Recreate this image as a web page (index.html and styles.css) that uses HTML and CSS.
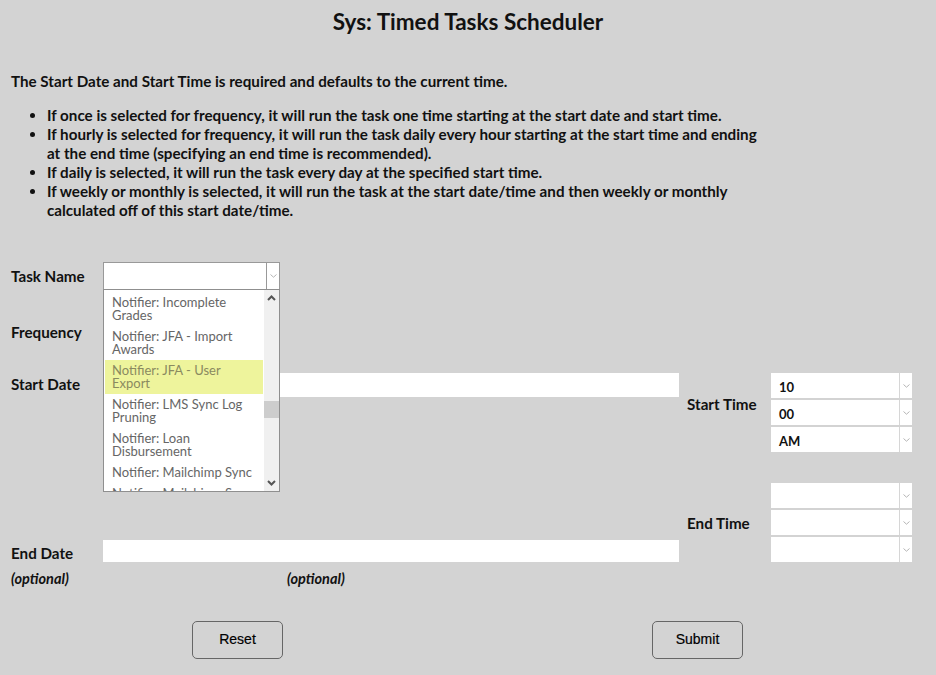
FILE: index.html
```html
<!DOCTYPE html>
<html>
<head>
<meta charset="utf-8">
<link rel="stylesheet" href="styles.css">
</head>
<body>
<h1 class="title">Sys: Timed Tasks Scheduler</h1>
<p class="intro">The Start Date and Start Time is required and defaults to the current time.</p>
<ul class="rules">
  <li>If once is selected for frequency, it will run the task one time starting at the start date and start time.</li>
  <li>If hourly is selected for frequency, it will run the task daily every hour starting at the start time and ending at the end time (specifying an end time is recommended).</li>
  <li>If daily is selected, it will run the task every day at the specified start time.</li>
  <li>If weekly or monthly is selected, it will run the task at the start date/time and then weekly or monthly calculated off of this start date/time.</li>
</ul>

<div class="form">
  <div class="left">
    <div class="row row-task">
      <label class="lbl">Task Name</label>
      <div class="task-wrap">
        <div class="select task-select">
          <span class="val"></span>
          <span class="arrow"><svg width="7" height="4" viewBox="0 0 7 4"><polyline points="0.5,0.5 3.5,3.2 6.5,0.5" fill="none" stroke="#b5b5b5" stroke-width="1"/></svg></span>
        </div>
        <div class="dropdown">
          <div class="items">
            <div class="item">Notifier: Incomplete Grades</div>
            <div class="item">Notifier: JFA - Import Awards</div>
            <div class="item hl">Notifier: JFA - User Export</div>
            <div class="item">Notifier: LMS Sync Log Pruning</div>
            <div class="item">Notifier: Loan Disbursement</div>
            <div class="item">Notifier: Mailchimp Sync</div>
            <div class="item">Notifier: Mailchimp Sync</div>
          </div>
          <div class="scrollbar">
            <svg class="sb-up" width="9" height="6" viewBox="0 0 9 6"><polyline points="1,5 4.5,1.5 8,5" fill="none" stroke="#555" stroke-width="2"/></svg>
            <div class="thumb"></div>
            <svg class="sb-down" width="9" height="6" viewBox="0 0 9 6"><polyline points="1,1 4.5,4.5 8,1" fill="none" stroke="#555" stroke-width="2"/></svg>
          </div>
        </div>
      </div>
    </div>
    <div class="row row-freq">
      <label class="lbl">Frequency</label>
      <div class="select freq-select"><span class="val"></span></div>
    </div>
    <div class="row row-start">
      <label class="lbl">Start Date</label>
      <div class="input date-input"></div>
    </div>
    <div class="row row-end">
      <label class="lbl">End Date</label>
      <div class="input date-input end-input"></div>
    </div>
    <div class="row row-opt">
      <span class="opt">(optional)</span>
      <span class="opt opt2">(optional)</span>
    </div>
  </div>
  <div class="right">
    <div class="tgroup tstart">
      <label class="lbl tlbl">Start Time</label>
      <div class="tsel">
        <div class="select small"><span class="val">10</span><span class="arrow"><svg width="7" height="4" viewBox="0 0 7 4"><polyline points="0.5,0.5 3.5,3.2 6.5,0.5" fill="none" stroke="#b5b5b5" stroke-width="1"/></svg></span></div>
        <div class="select small"><span class="val">00</span><span class="arrow"><svg width="7" height="4" viewBox="0 0 7 4"><polyline points="0.5,0.5 3.5,3.2 6.5,0.5" fill="none" stroke="#b5b5b5" stroke-width="1"/></svg></span></div>
        <div class="select small"><span class="val">AM</span><span class="arrow"><svg width="7" height="4" viewBox="0 0 7 4"><polyline points="0.5,0.5 3.5,3.2 6.5,0.5" fill="none" stroke="#b5b5b5" stroke-width="1"/></svg></span></div>
      </div>
    </div>
    <div class="tgroup tend">
      <label class="lbl tlbl">End Time</label>
      <div class="tsel">
        <div class="select small"><span class="val"></span><span class="arrow"><svg width="7" height="4" viewBox="0 0 7 4"><polyline points="0.5,0.5 3.5,3.2 6.5,0.5" fill="none" stroke="#b5b5b5" stroke-width="1"/></svg></span></div>
        <div class="select small"><span class="val"></span><span class="arrow"><svg width="7" height="4" viewBox="0 0 7 4"><polyline points="0.5,0.5 3.5,3.2 6.5,0.5" fill="none" stroke="#b5b5b5" stroke-width="1"/></svg></span></div>
        <div class="select small"><span class="val"></span><span class="arrow"><svg width="7" height="4" viewBox="0 0 7 4"><polyline points="0.5,0.5 3.5,3.2 6.5,0.5" fill="none" stroke="#b5b5b5" stroke-width="1"/></svg></span></div>
      </div>
    </div>
  </div>
</div>

<div class="buttons">
  <button class="btn reset">Reset</button>
  <button class="btn submit">Submit</button>
</div>
</body>
</html>
```

FILE: styles.css
```css
html, body {
  margin: 0;
  padding: 0;
  background: #d3d3d3;
}
body {
  font-family: Lato, "Liberation Sans", sans-serif;
  color: #111;
  width: 936px;
  height: 675px;
  overflow: hidden;
}
.title {
  margin: 0;
  padding-top: 9px;
  height: 28px;
  line-height: 26px;
  font-size: 22.5px;
  font-weight: 700;
  text-align: center;
}
.intro {
  margin: 35px 0 0 11px;
  font-size: 15.2px;
  font-weight: 700;
  line-height: 19px;
}
.rules {
  margin: 15px 0 0 0;
  padding: 0 0 0 47px;
  width: 725px;
  font-size: 15.2px;
  font-weight: 700;
  line-height: 19px;
}
.rules li {
  padding: 0;
}
.form {
  display: flex;
  margin-top: 42px;
}
.left {
  width: 679px;
  display: flex;
  flex-direction: column;
}
.row {
  display: flex;
  align-items: center;
}
.lbl {
  width: 103px;
  padding-left: 11px;
  box-sizing: border-box;
  font-size: 15.2px;
  font-weight: 700;
  flex: none;
}
.select {
  display: flex;
  background: #fff;
  box-sizing: border-box;
}
.select .val {
  flex: 1;
  font-size: 13px;
  font-weight: 700;
  padding-left: 8px;
}
.select .arrow {
  width: 12px;
  border-left: 1px solid #d6d6d6;
  display: flex;
  align-items: center;
  justify-content: center;
}
.task-wrap {
  position: relative;
}
.task-select {
  width: 177px;
  height: 28px;
  border: 1px solid #999;
}
.task-select .arrow {
  border-left: 1px solid #999;
}
.dropdown {
  position: absolute;
  left: 0;
  top: 27px;
  width: 177px;
  height: 203px;
  box-sizing: border-box;
  border: 1px solid #8f8f8f;
  background: #fff;
  display: flex;
  overflow: hidden;
  z-index: 5;
}
.items {
  flex: 1;
  padding: 2px 1px 0 1px;
  overflow: hidden;
}
.item {
  font-size: 13px;
  line-height: 13px;
  color: #666;
  padding: 4px 10px 4px 7px;
}
.item.hl {
  background: #eef49c;
  color: #8a8a60;
}
.scrollbar {
  width: 15px;
  background: #f0f0f0;
  position: relative;
  flex: none;
}
.sb-up {
  position: absolute;
  left: 3px;
  top: 5px;
}
.sb-down {
  position: absolute;
  left: 3px;
  bottom: 5px;
}
.thumb {
  position: absolute;
  left: 0;
  top: 111px;
  width: 15px;
  height: 17px;
  background: #cdcdcd;
}
.row-task {
  height: 28px;
  margin-top: 0;
}
.row-task .lbl {
  padding-bottom: 1px;
}
.row-freq {
  height: 25px;
  margin-top: 30px;
}
.row-freq .lbl {
  padding-bottom: 2px;
}
.freq-select {
  width: 177px;
  height: 25px;
}
.row-start {
  margin-top: 28px;
  height: 24px;
}
.row-start .lbl {
  padding-bottom: 3px;
}
.input {
  flex: 1;
  background: #fff;
}
.date-input {
  height: 24px;
}
.row-end {
  margin-top: 143px;
  height: 22px;
}
.end-input {
  height: 22px;
}
.row-end .lbl {
  padding-top: 4px;
}
.row-opt {
  margin-top: 8px;
  height: 16px;
}
.opt {
  font-size: 14.5px;
  font-weight: 700;
  font-style: italic;
  padding-left: 11px;
  width: 287px;
  box-sizing: border-box;
}
.opt2 {
  padding-left: 0;
}
.right {
  width: 233px;
  display: flex;
  flex-direction: column;
}
.tgroup {
  display: flex;
  align-items: center;
}
.lbl.tlbl {
  padding-left: 8px;
  width: 92px;
}
.tstart {
  margin-top: 111px;
}
.tstart .tlbl {
  padding-bottom: 17px;
}
.tend {
  margin-top: 31px;
}
.tend .tlbl {
  padding-top: 1px;
}
.tsel {
  display: flex;
  flex-direction: column;
  gap: 2px;
}
.select.small {
  width: 141px;
  height: 25px;
  align-items: center;
}
.select.small .val {
  padding-left: 8px;
  padding-top: 2px;
}
.select.small .arrow {
  height: 25px;
}
.buttons {
  display: flex;
  margin-top: 35px;
}
.btn {
  width: 91px;
  height: 38px;
  background: transparent;
  border: 1px solid #666;
  border-radius: 5px;
  font-family: "Liberation Sans", Arial, sans-serif;
  font-size: 14px;
  color: #000;
  padding: 0 0 2px 0;
  -webkit-text-stroke: 0.2px #000;
}
.reset {
  margin-left: 192px;
}
.submit {
  margin-left: 369px;
}
```
